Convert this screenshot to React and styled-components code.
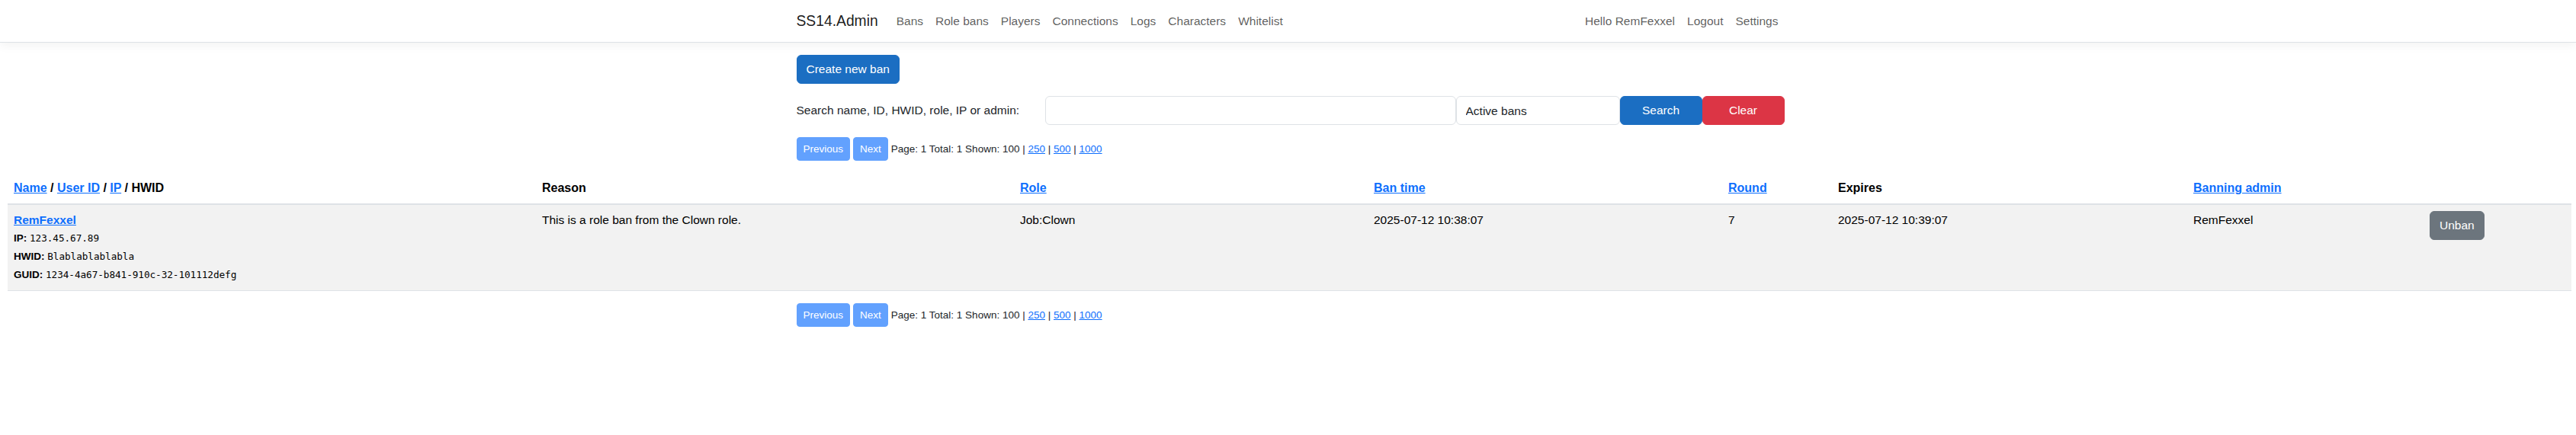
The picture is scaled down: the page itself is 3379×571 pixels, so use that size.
import styled, { createGlobalStyle } from "styled-components"

const GlobalStyle = createGlobalStyle`
  html, body {
    margin: 0;
    padding: 0;
    background: #fff;
  }
  body {
    font-family: "Liberation Sans", Arial, sans-serif;
    font-size: 15.5px;
    line-height: 24px;
    color: #212529;
  }
  * {
    box-sizing: border-box;
  }
`

const NavBar = styled.header`
  background: #fff;
  border-bottom: 1px solid #dee2e6;
  box-shadow: 0 4px 12px rgba(0, 0, 0, 0.05);
  margin-bottom: 16px;
`

const Container = styled.div`
  max-width: 1320px;
  margin: 0 auto;
  padding: 0 9px 0 15px;
`

const NavInner = styled(Container)`
  display: flex;
  align-items: center;
  padding-top: 8px;
  padding-bottom: 7px;
`

const Brand = styled.a`
  font-size: 19.3px;
  line-height: 30px;
  padding: 5px 0;
  margin-right: 16px;
  color: rgba(0, 0, 0, 0.9);
  text-decoration: none;
`

const NavList = styled.nav`
  display: flex;
  align-items: center;
  flex-grow: ${(p) => (p.$grow ? 1 : 0)};
`

const NavLink = styled.a`
  padding: 8px;
  line-height: 24px;
  color: rgba(0, 0, 0, 0.65);
  text-decoration: none;
`

const Btn = styled.button`
  display: inline-block;
  font-family: inherit;
  font-size: ${(p) => (p.$small ? "13.5px" : "15.5px")};
  line-height: ${(p) => (p.$small ? "21px" : "24px")};
  padding: ${(p) => (p.$small ? "4px 8px" : "6px 12px")};
  width: ${(p) => p.$width || "auto"};
  border: 1px solid ${(p) => p.$color};
  background: ${(p) => p.$color};
  color: #fff;
  border-radius: ${(p) => (p.$small ? "4px" : "6px")};
  text-align: center;
  cursor: pointer;
`

const SearchForm = styled.form`
  display: flex;
  align-items: center;
  margin-top: 16px;
  height: 38px;
`

const SearchLabel = styled.label`
  margin-right: 34px;
  white-space: nowrap;
`

const TextInput = styled.input`
  flex: 1;
  height: 38px;
  border: 1px solid #dee2e6;
  border-radius: 6px;
  padding: 6px 12px;
  font-family: inherit;
  font-size: 15.5px;
  background: #fff;
`

const Select = styled.select`
  width: 215px;
  height: 38px;
  border: 1px solid #dee2e6;
  border-radius: 6px;
  padding: 6px 12px;
  font-family: inherit;
  font-size: 15.5px;
  color: #212529;
  background: #fff;
  appearance: none;
`

const Pager = styled.div`
  display: flex;
  align-items: center;
  gap: 4px;
  margin-top: 16px;
  font-size: 13.5px;
  line-height: 21px;
`

const Link = styled.a`
  color: #0d6efd;
  text-decoration: underline;
`

const TableWrap = styled.div`
  margin: 16px 6px 0 10px;
`

const Table = styled.table`
  width: 100%;
  table-layout: fixed;
  border-collapse: collapse;
`

const Col = styled.col`
  width: ${(p) => p.$w};
`

const Th = styled.th`
  text-align: left;
  font-weight: bold;
  font-size: 16px;
  padding: 8px;
  vertical-align: bottom;
  border-bottom: 2px solid #dee2e6;
  color: #000;
`

const Td = styled.td`
  padding: 8px;
  vertical-align: top;
  background: #f2f2f2;
  border-bottom: 1px solid #dee2e6;
  color: #000;
`

const NameLink = styled(Link)`
  font-weight: bold;
`

const InfoLine = styled.div`
  line-height: 24px;
  font-size: 13.5px;

  b {
    font-weight: bold;
  }
`

const Mono = styled.span`
  font-family: "DejaVu Sans Mono", "Liberation Mono", monospace;
  font-size: 12.6px;
`

const BottomPager = styled(Pager)`
  margin-top: 16px;
`

function Pagination({ as: Wrapper = Pager }) {
  return (
    <Wrapper>
      <Btn $small $color="#62a1fe" disabled>
        Previous
      </Btn>
      <Btn $small $color="#62a1fe" disabled>
        Next
      </Btn>
      <span>
        Page: 1 Total: 1 Shown: 100 | <Link href="#">250</Link> |{" "}
        <Link href="#">500</Link> | <Link href="#">1000</Link>
      </span>
    </Wrapper>
  )
}

export default function App() {
  return (
    <>
      <GlobalStyle />
      <NavBar>
        <NavInner>
          <Brand href="#">SS14.Admin</Brand>
          <NavList $grow>
            <NavLink href="#">Bans</NavLink>
            <NavLink href="#">Role bans</NavLink>
            <NavLink href="#">Players</NavLink>
            <NavLink href="#">Connections</NavLink>
            <NavLink href="#">Logs</NavLink>
            <NavLink href="#">Characters</NavLink>
            <NavLink href="#">Whitelist</NavLink>
          </NavList>
          <NavList>
            <NavLink href="#">Hello RemFexxel</NavLink>
            <NavLink href="#">Logout</NavLink>
            <NavLink href="#">Settings</NavLink>
          </NavList>
        </NavInner>
      </NavBar>

      <Container>
        <Btn $color="#1b6ec2">Create new ban</Btn>
        <SearchForm onSubmit={(e) => e.preventDefault()}>
          <SearchLabel>Search name, ID, HWID, role, IP or admin:</SearchLabel>
          <TextInput type="text" />
          <Select defaultValue="active">
            <option value="active">Active bans</option>
            <option value="all">All bans</option>
          </Select>
          <Btn $color="#1b6ec2" $width="108px" type="submit">
            Search
          </Btn>
          <Btn $color="#dc3545" $width="108px" type="button">
            Clear
          </Btn>
        </SearchForm>
        <Pagination />
      </Container>

      <TableWrap>
        <Table>
          <colgroup>
            <Col $w="693px" />
            <Col $w="627px" />
            <Col $w="464px" />
            <Col $w="465px" />
            <Col $w="144px" />
            <Col $w="466px" />
            <Col $w="310px" />
            <Col $w="194px" />
          </colgroup>
          <thead>
            <tr>
              <Th>
                <Link href="#">Name</Link> / <Link href="#">User ID</Link> /{" "}
                <Link href="#">IP</Link> / HWID
              </Th>
              <Th>Reason</Th>
              <Th>
                <Link href="#">Role</Link>
              </Th>
              <Th>
                <Link href="#">Ban time</Link>
              </Th>
              <Th>
                <Link href="#">Round</Link>
              </Th>
              <Th>Expires</Th>
              <Th>
                <Link href="#">Banning admin</Link>
              </Th>
              <Th></Th>
            </tr>
          </thead>
          <tbody>
            <tr>
              <Td>
                <div>
                  <NameLink href="#">RemFexxel</NameLink>
                </div>
                <InfoLine>
                  <b>IP:</b> <Mono>123.45.67.89</Mono>
                </InfoLine>
                <InfoLine>
                  <b>HWID:</b> <Mono>Blablablablabla</Mono>
                </InfoLine>
                <InfoLine>
                  <b>GUID:</b> <Mono>1234-4a67-b841-910c-32-101112defg</Mono>
                </InfoLine>
              </Td>
              <Td>This is a role ban from the Clown role.</Td>
              <Td>Job:Clown</Td>
              <Td>2025-07-12 10:38:07</Td>
              <Td>7</Td>
              <Td>2025-07-12 10:39:07</Td>
              <Td>RemFexxel</Td>
              <Td>
                <Btn $color="#6c757d">Unban</Btn>
              </Td>
            </tr>
          </tbody>
        </Table>
      </TableWrap>

      <Container>
        <Pagination as={BottomPager} />
      </Container>
    </>
  )
}
